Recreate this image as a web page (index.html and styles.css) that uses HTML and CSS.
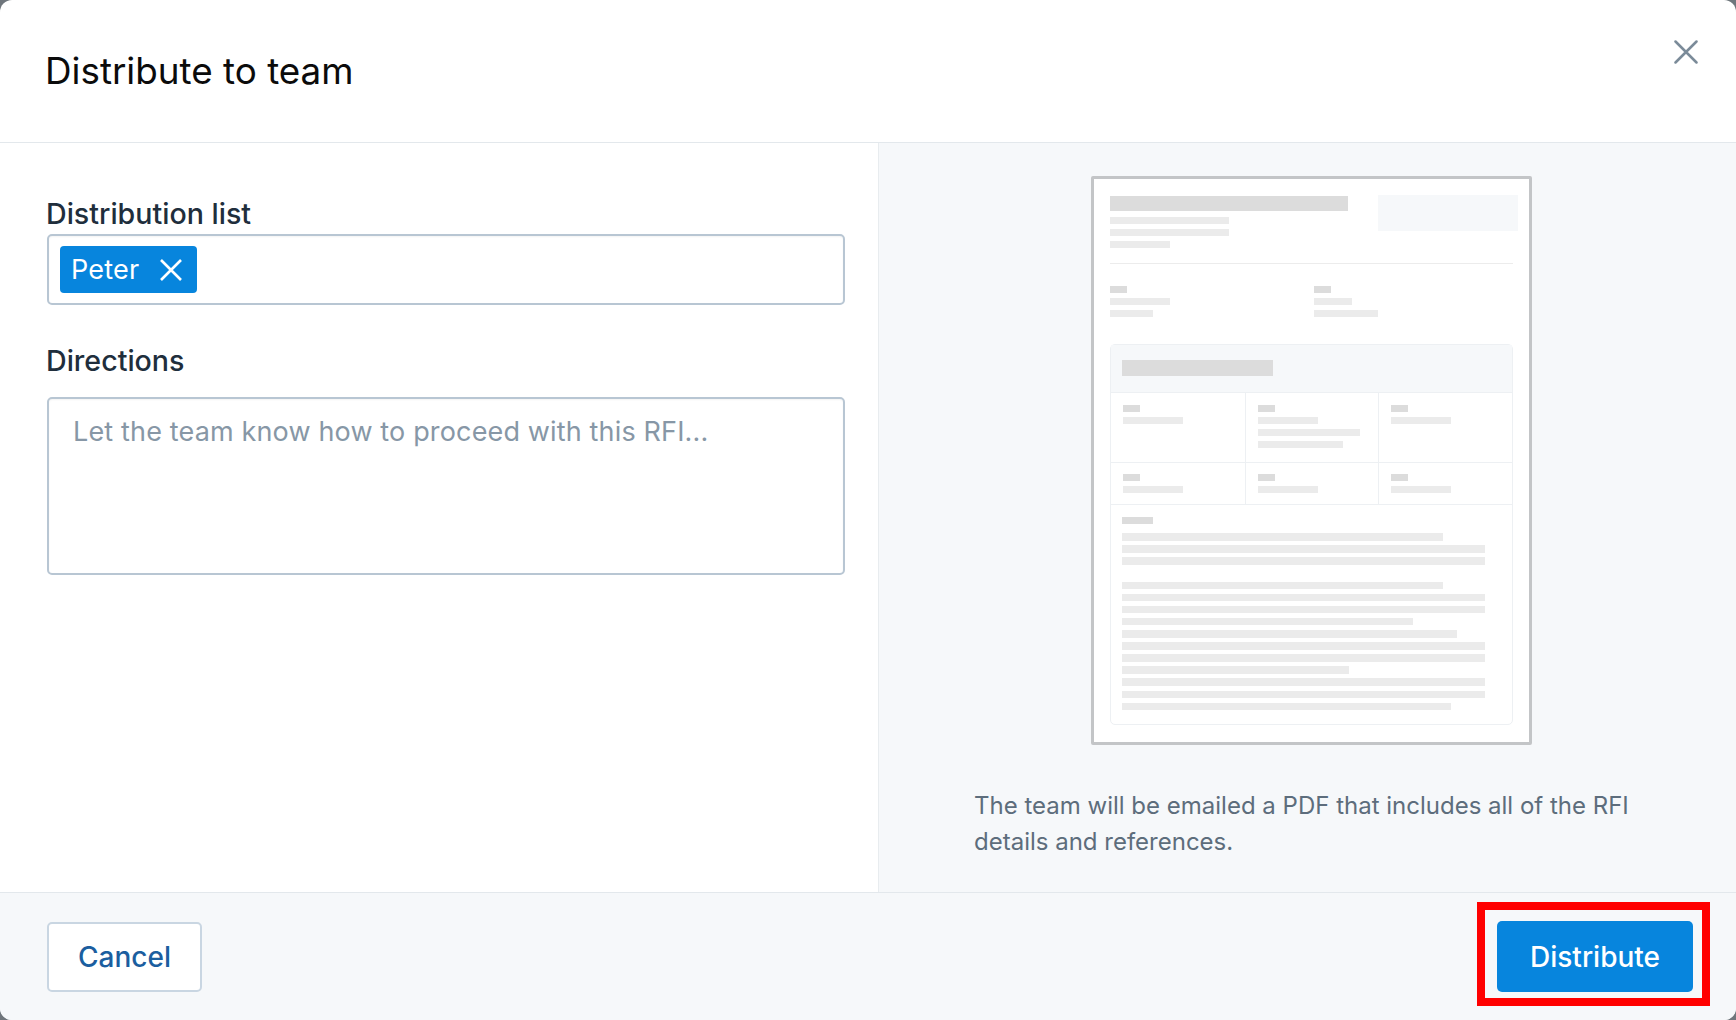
FILE: index.html
```html
<!DOCTYPE html>
<html>
<head>
	<meta charset="utf-8">
	<title>Distribute to team</title>
	<link rel="stylesheet" href="styles.css">
</head>
<body>
<div class="modal">
	<div class="modal-header">
		<h1>Distribute to team</h1>
		<button class="close" title="Close">
			<svg width="24" height="24" viewBox="0 0 24 24"><path d="M1.5 1.5L22.5 22.5M22.5 1.5L1.5 22.5"/></svg>
		</button>
	</div>

	<div class="modal-body">
		<div class="form-col">
			<label class="field-label">Distribution list</label>
			<div class="tag-input">
				<span class="tag">Peter
					<svg width="24" height="22" viewBox="0 0 24 22"><path d="M2 1L22 21M22 1L2 21"/></svg>
				</span>
			</div>

			<label class="field-label directions-label">Directions</label>
			<textarea class="directions" placeholder="Let the team know how to proceed with this RFI..."></textarea>
		</div>

		<div class="preview-col">
			<!-- thumbnail of the RFI pdf -->
			<div class="page">
				<div class="page-top">
					<div class="stack">
						<div class="sk dark title-bar"></div>
						<div class="sk" style="width:119px"></div>
						<div class="sk" style="width:119px"></div>
						<div class="sk" style="width:60px"></div>
					</div>
					<div class="stamp"></div>
				</div>
				<div class="rule"></div>
				<div class="fields">
					<div class="stack">
						<div class="sk dark small"></div>
						<div class="sk" style="width:60px"></div>
						<div class="sk" style="width:43px"></div>
					</div>
					<div class="stack">
						<div class="sk dark small"></div>
						<div class="sk" style="width:38px"></div>
						<div class="sk" style="width:64px"></div>
					</div>
				</div>
				<div class="card">
					<div class="card-head"><div class="sk dark head-bar"></div></div>
					<div class="card-row">
						<div class="cell">
							<div class="sk dark small"></div>
							<div class="sk" style="width:60px"></div>
						</div>
						<div class="cell">
							<div class="sk dark small"></div>
							<div class="sk" style="width:60px"></div>
							<div class="sk" style="width:102px"></div>
							<div class="sk" style="width:85px"></div>
						</div>
						<div class="cell">
							<div class="sk dark small"></div>
							<div class="sk" style="width:60px"></div>
						</div>
					</div>
					<div class="card-row short">
						<div class="cell">
							<div class="sk dark small"></div>
							<div class="sk" style="width:60px"></div>
						</div>
						<div class="cell">
							<div class="sk dark small"></div>
							<div class="sk" style="width:60px"></div>
						</div>
						<div class="cell">
							<div class="sk dark small"></div>
							<div class="sk" style="width:60px"></div>
						</div>
					</div>
					<div class="card-text">
						<div class="sk dark" style="width:31px"></div>
						<div class="para">
							<div class="sk" style="width:321px"></div>
							<div class="sk full"></div>
							<div class="sk full"></div>
						</div>
						<div class="para second">
							<div class="sk" style="width:321px"></div>
							<div class="sk full"></div>
							<div class="sk full"></div>
							<div class="sk" style="width:291px"></div>
							<div class="sk" style="width:335px"></div>
							<div class="sk full"></div>
							<div class="sk full"></div>
							<div class="sk" style="width:227px"></div>
							<div class="sk full"></div>
							<div class="sk full"></div>
							<div class="sk" style="width:329px"></div>
						</div>
					</div>
				</div>
			</div>
			<p class="note">The team will be emailed a PDF that includes all of the RFI details and references.</p>
		</div>
	</div>

	<div class="modal-footer">
		<button class="btn btn-cancel">Cancel</button>
		<span class="marked"><button class="btn btn-primary">Distribute</button></span>
	</div>
</div>
</body>
</html>
```

FILE: styles.css
```css
html, body {height:100%;}
body {
	margin:0;
	background:#6f767c;
	font-family:Inter, "Noto Sans", sans-serif;
	color:#202e3c;
}
.modal {
	height:100%;
	display:flex;
	flex-direction:column;
	background:#fff;
	border-radius:12px;
	overflow:hidden;
}

.modal-header {
	height:142px;
	flex:none;
	display:flex;
	justify-content:space-between;
	align-items:center;
	padding:0 38px 0 45px;
	border-bottom:1px solid #e3e8ec;
}
.modal-header h1 {
	margin:0;
	font-size:36.8px;
	font-weight:400;
	line-height:1.2;
	color:#0b0b0b;
}
.close {
	align-self:flex-start;
	margin-top:40px;
	padding:0;
	border:0;
	background:none;
	width:24px;
	height:24px;
	cursor:pointer;
}
.close svg {display:block;}
.close path {stroke:#7b8b99;stroke-width:2.5;stroke-linecap:round;fill:none;}

.modal-body {
	flex:1;
	display:grid;
	grid-template-columns:878px 1fr;
	min-height:0;
}
.form-col {
	display:flex;
	flex-direction:column;
	padding:53px 33px 0 47px;
}
.field-label {
	font-size:28.6px;
	font-weight:500;
	line-height:36px;
	color:#202e3c;
	margin-left:-1px;
}
.tag-input {
	margin-top:2px;
	height:71px;
	box-sizing:border-box;
	padding:10px 11px;
	border:2px solid #b8c6d3;
	border-radius:5px;
	box-shadow:inset 0 1px 2px rgba(0,0,0,0.05);
	display:flex;
	align-items:center;
}
.tag {
	height:47px;
	box-sizing:border-box;
	display:inline-flex;
	align-items:center;
	gap:20px;
	padding:0 14px 0 11px;
	background:#0785dd;
	color:#fff;
	border-radius:4px;
	font-size:27px;
	letter-spacing:0.2px;
}
.tag svg {display:block;}
.tag path {stroke:#fff;stroke-width:2.6;fill:none;}

.directions-label {margin-top:38px;}
.directions {
	margin-top:18px;
	height:178px;
	box-sizing:border-box;
	padding:13px 24px;
	border:2px solid #b8c6d3;
	border-radius:5px;
	box-shadow:inset 0 1px 2px rgba(0,0,0,0.05);
	font-family:inherit;
	font-size:27px;
	letter-spacing:0.15px;
	line-height:40px;
	color:#202e3c;
	resize:none;
	outline:none;
}
.directions::placeholder {color:#8797a6;}

.preview-col {
	background:#f6f8fa;
	border-left:1px solid #e8ecef;
	padding:33px 97px 0;
}
.page {
	width:441px;
	height:569px;
	box-sizing:border-box;
	margin:0 0 43px 115px;
	padding:17px 16px 16px;
	background:#fff;
	border:3px solid #c3c5c7;
	border-radius:2px;
	filter:blur(0.4px);
}
.sk {height:7px;background:#ebebeb;}
.sk.dark {background:#dcdcdc;}
.sk.small {width:17px;}
.stack {display:flex;flex-direction:column;gap:5px;}
.page-top {display:flex;justify-content:space-between;}
.page-top .title-bar {width:238px;height:15px;margin-bottom:1px;}
.stamp {
	width:140px;
	height:36px;
	margin:-1px -5px 0 0;
	background:#f6f8fa;
}
.rule {height:1px;background:#ececec;margin-top:15px;}
.fields {
	display:grid;
	grid-template-columns:204px 1fr;
	margin-top:22px;
}
.card {
	margin-top:27px;
	border:1px solid #edf0f3;
	border-radius:5px;
}
.card-head {
	background:#f6f8fa;
	padding:15px 11px 16px;
}
.head-bar {width:151px;height:16px;}
.card-row {
	display:grid;
	grid-template-columns:1fr 1fr 1fr;
	border-top:1px solid #edf0f3;
}
.cell {
	display:flex;
	flex-direction:column;
	gap:5px;
	padding:12px 12px 14px;
}
.cell + .cell {border-left:1px solid #edf0f3;}
.card-row.short .cell {padding:11px 12px 11px;}
.card-text {
	border-top:1px solid #edf0f3;
	padding:12px 11px 14px;
}
.para {display:flex;flex-direction:column;gap:4.6px;margin-top:9px;}
.para.second {margin-top:17px;}
.para .sk {height:7.5px;}
.sk.full {width:363px;}

.note {
	margin:0;
	font-size:24px;
	line-height:36px;
	color:#5d6d7c;
	margin-left:-2px;
}

.modal-footer {
	height:127px;
	flex:none;
	display:flex;
	justify-content:space-between;
	align-items:center;
	padding:0 43px 0 47px;
	background:#f6f8fa;
	border-top:1px solid #e3e8ec;
}
.btn {
	font-family:inherit;
	font-size:28px;
	font-weight:500;
	border-radius:5px;
	cursor:pointer;
	box-sizing:border-box;
}
.btn-cancel {
	height:70px;
	padding:0 29px;
	background:#fff;
	border:2px solid #c9d6e2;
	color:#1b5e9f;
}
.btn-primary {
	height:71px;
	padding:0 33px;
	background:#0785dd;
	border:0;
	color:#fff;
	display:block;
}
.marked {position:relative;display:block;}
.marked:after {
	content:"";
	position:absolute;
	top:-19px;
	left:-20px;
	right:-17px;
	bottom:-14px;
	border:8px solid #f00;
	pointer-events:none;
}
```
